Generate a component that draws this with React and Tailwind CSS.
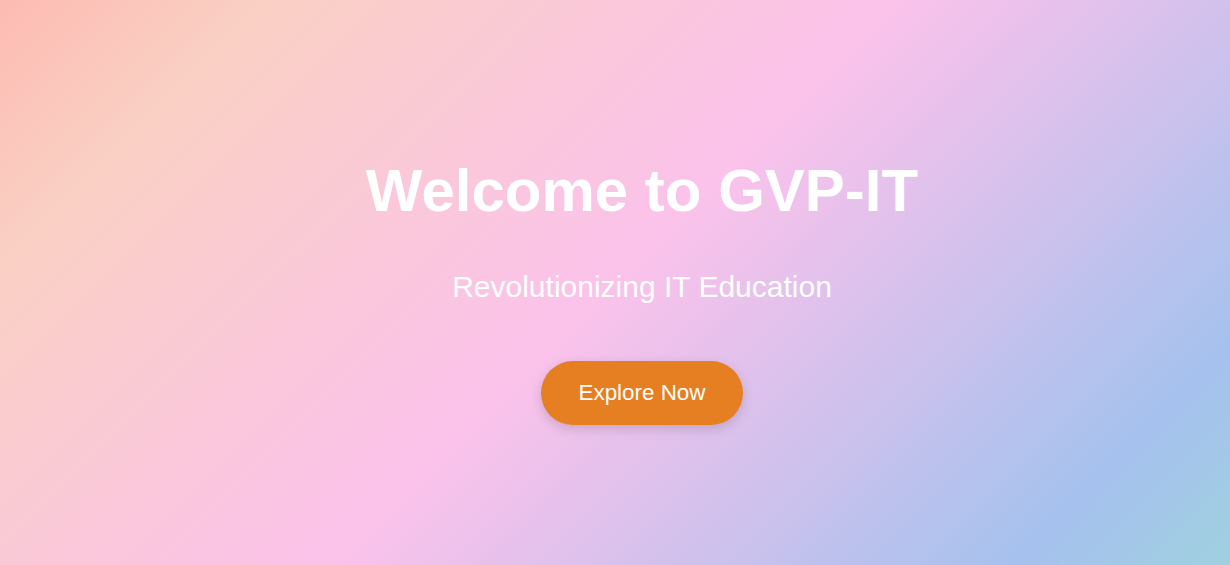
export default function App() {
  return (
    <div className="flex h-[565px] w-full flex-col items-center justify-center bg-[linear-gradient(135deg,#fdbbb2_0%,#fad0c4_15%,#fbc2eb_50%,#a6c1ee_88%,#9fd0df_100%)] pl-[54px] pt-[16px] font-['Liberation_Sans',Arial,sans-serif] text-white">
      <h1 className="text-[60px] font-bold leading-[69px]">Welcome to GVP-IT</h1>
      <p className="mt-[45px] text-[30px] leading-[34px]">Revolutionizing IT Education</p>
      <button className="mt-[57px] h-[64px] rounded-full bg-[#e67e22] px-[38px] text-[22.4px] text-white shadow-[0_4px_12px_rgba(0,0,0,0.15)]">
        Explore Now
      </button>
    </div>
  );
}
